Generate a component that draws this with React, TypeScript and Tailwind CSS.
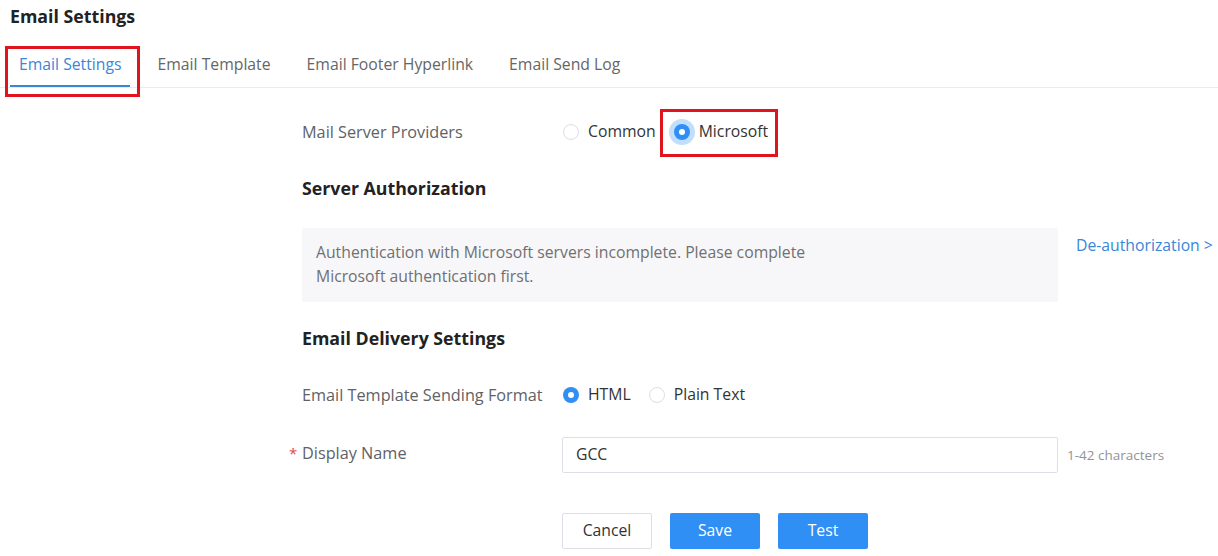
import React from "react";

function Radio({ checked, focus }: { checked?: boolean; focus?: boolean }) {
  if (checked) {
    return (
      <span
        className={
          "flex h-[16px] w-[16px] items-center justify-center rounded-full bg-[#2f8ff4] " +
          (focus ? "ring-[5px] ring-[#c2defd]" : "")
        }
      >
        <span className="h-[6px] w-[6px] rounded-full bg-white" />
      </span>
    );
  }
  return <span className="h-[16px] w-[16px] rounded-full border border-[#dcdfe6] bg-white" />;
}

function Option({ label, checked, focus }: { label: string; checked?: boolean; focus?: boolean }) {
  return (
    <label className="flex items-center gap-[9px] text-[15.75px] text-[#333]">
      <Radio checked={checked} focus={focus} />
      <span>{label}</span>
    </label>
  );
}

export default function App() {
  const tabs = ["Email Settings", "Email Template", "Email Footer Hyperlink", "Email Send Log"];
  return (
    <div
      className="relative h-[556px] w-[1218px] overflow-hidden bg-white text-[#333]"
      style={{ fontFamily: '"Open Sans", "Noto Sans", sans-serif' }}
    >
      <h1 className="pl-[10px] pt-[4px] text-[17.75px] font-bold leading-[24px] text-[#222]">Email Settings</h1>

      {/* tab strip */}
      <div className="mt-[14px] flex h-[46px] border-b border-[#ebebeb] pl-[19px]">
        {tabs.map((t, i) => (
          <div
            key={t}
            className={
              "relative flex items-center text-[15.75px] leading-[24px] " +
              (i === 0 ? "text-[#3a86d8]" : "text-[#666]") +
              (i > 0 ? " ml-[36px]" : "")
            }
          >
            <span className="-mt-[2px]">{t}</span>
            {i === 0 && (
              <span className="absolute bottom-[0px] left-[-9px] right-[-8px] h-[2px] bg-[#3a86d8]" />
            )}
          </div>
        ))}
      </div>

      {/* annotation frames */}
      <div className="absolute left-[5px] top-[46px] h-[51px] w-[135px] border-[3px] border-[#e0141c]" />
      <div className="absolute left-[660px] top-[109px] h-[48px] w-[118px] border-[3px] border-[#e0141c]" />

      <div className="pl-[302px]">
        <div className="mt-[32px] flex h-[24px] items-center">
          <div className="w-[260px] text-[16.25px] text-[#606266]">Mail Server Providers</div>
          <div className="ml-[1px] flex items-center gap-[18px]">
            <Option label="Common" />
            <Option label="Microsoft" checked focus />
          </div>
        </div>

        <h2 className="mt-[32px] text-[17.75px] font-bold leading-[24px] text-[#222]">Server Authorization</h2>

        <div className="mt-[28px] flex items-start">
          <div className="h-[74px] w-[756px] rounded-[2px] bg-[#f7f7fa] px-[14px] pt-[12px] text-[15.75px] leading-[24px] text-[#707070]">
            Authentication with Microsoft servers incomplete. Please complete
            <br />
            Microsoft authentication first.
          </div>
          <a className="ml-[18px] mt-[5px] text-[15.75px] leading-[24px] text-[#3a86d8]">De-authorization &gt;</a>
        </div>

        <h2 className="mt-[24px] text-[17.75px] font-bold leading-[24px] text-[#222]">Email Delivery Settings</h2>

        <div className="mt-[33px] flex h-[24px] items-center">
          <div className="w-[260px] text-[16.25px] text-[#606266]">Email Template Sending Format</div>
          <div className="ml-[1px] flex items-center gap-[18px]">
            <Option label="HTML" checked />
            <Option label="Plain Text" />
          </div>
        </div>

        <div className="mt-[30px] flex items-center">
          <div className="relative -top-[2px] w-[260px] text-[16.25px] text-[#606266]">
            <span className="absolute left-[-13px] top-[1px] text-[15px] text-[#e5484d]">*</span>
            Display Name
          </div>
          <div className="flex h-[36px] w-[496px] items-center rounded-[2px] border border-[#dcdfe6] px-[13px] text-[15.75px] text-[#333]">
            GCC
          </div>
          <span className="ml-[9px] text-[13.5px] text-[#909399]">1-42 characters</span>
        </div>

        <div className="mt-[40px] flex gap-[18px] pl-[260px]">
          <button className="h-[36px] w-[90px] rounded-[2px] border border-[#dcdfe6] bg-white text-[15.75px] text-[#333]">
            Cancel
          </button>
          <button className="h-[36px] w-[90px] rounded-[2px] bg-[#2f8ff4] text-[15.75px] text-white">Save</button>
          <button className="h-[36px] w-[90px] rounded-[2px] bg-[#2f8ff4] text-[15.75px] text-white">Test</button>
        </div>
      </div>
    </div>
  );
}
